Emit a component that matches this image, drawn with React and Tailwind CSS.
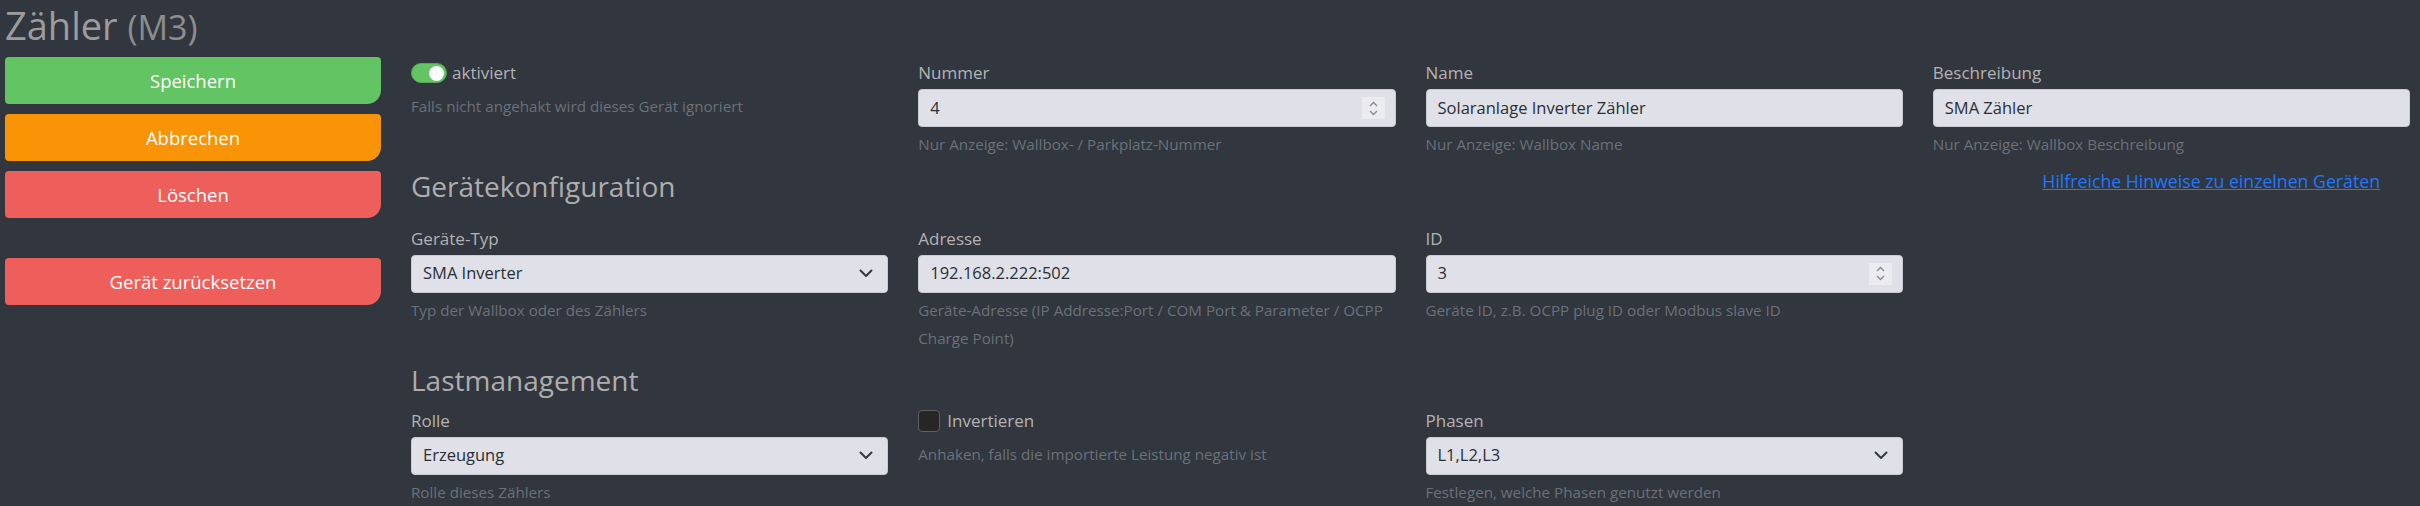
import React from 'react';

const font = "font-['Open_Sans','Noto_Sans',sans-serif]";

function Chevron() {
  return (
    <svg width="14" height="9" viewBox="0 0 14 9" className="shrink-0">
      <polyline points="1.5,1.5 7,7 12.5,1.5" fill="none" stroke="#343a40" strokeWidth="2" strokeLinecap="round" strokeLinejoin="round" />
    </svg>
  );
}

function Spinner() {
  return (
    <div className="flex h-[22px] w-[23px] flex-col items-center justify-center gap-[3px] bg-[#ebebf0]">
      <svg width="9" height="6" viewBox="0 0 9 6">
        <polyline points="1,5 4.5,1.5 8,5" fill="none" stroke="#8a8a92" strokeWidth="1.4" />
      </svg>
      <svg width="9" height="6" viewBox="0 0 9 6">
        <polyline points="1,1 4.5,4.5 8,1" fill="none" stroke="#8a8a92" strokeWidth="1.4" />
      </svg>
    </div>
  );
}

function Label({ children }) {
  return <div className="h-[24px] text-[17px] leading-[24px] text-[#b3b3b3]">{children}</div>;
}

function Help({ children, className = '' }) {
  return <div className={`text-[15.2px] leading-[28px] text-[#69717a] ${className}`}>{children}</div>;
}

function Field({ label, value, help, type = 'text' }) {
  return (
    <div className="flex flex-col">
      <Label>{label}</Label>
      <div className="mt-[4px] flex h-[38px] items-center justify-between rounded-[4px] border border-[#c9cad2] bg-[#dfe0e8] pl-[11px] pr-[10px] text-[16.5px] text-[#2b2f35]">
        <span>{value}</span>
        {type === 'number' && <Spinner />}
        {type === 'select' && <span className="pr-[4px]"><Chevron /></span>}
      </div>
      <Help className="mt-[3px]">{help}</Help>
    </div>
  );
}

function Heading({ children }) {
  return <h3 className="text-[28px] leading-[34px] text-[#adadad]">{children}</h3>;
}

function SideButton({ color, children }) {
  return (
    <button className={`flex h-[47px] w-full items-center justify-center rounded-tl-[4px] rounded-tr-[4px] rounded-bl-[4px] rounded-br-[14px] text-[18.5px] text-white ${color}`}>
      {children}
    </button>
  );
}

export default function App() {
  return (
    <div className={`min-h-screen bg-[#32363e] pl-[5px] pr-[10px] ${font}`}>
      <h1 className="h-[57px] pt-[2px] text-[38px] leading-[46px] text-[#9c9c9c]">
        Zähler <span className="text-[34px] text-[#8d8d8d]">(M3)</span>
      </h1>

      <div className="flex gap-[30px]">
        <aside className="flex w-[376px] shrink-0 flex-col gap-[10px]">
          <SideButton color="bg-[#62c462]">Speichern</SideButton>
          <SideButton color="bg-[#f89406]">Abbrechen</SideButton>
          <SideButton color="bg-[#ee5f5b]">Löschen</SideButton>
          <div className="h-[20px]" />
          <SideButton color="bg-[#ee5f5b]">Gerät zurücksetzen</SideButton>
        </aside>

        <main className="flex min-w-0 flex-1 flex-col pt-[4px]">
          <div className="grid grid-cols-4 gap-x-[30px]">
            <div className="flex flex-col">
              <div className="flex h-[24px] items-center gap-[5px]">
                <div className="flex h-[20px] w-[36px] items-center justify-end rounded-full border border-[#55a955] bg-[#62c462] px-[2px]">
                  <div className="h-[15px] w-[15px] rounded-full bg-white" />
                </div>
                <span className="text-[17px] text-[#b3b3b3]">aktiviert</span>
              </div>
              <Help className="mt-[7px]">Falls nicht angehakt wird dieses Gerät ignoriert</Help>
            </div>
            <Field label="Nummer" value="4" type="number" help="Nur Anzeige: Wallbox- / Parkplatz-Nummer" />
            <Field label="Name" value="Solaranlage Inverter Zähler" help="Nur Anzeige: Wallbox Name" />
            <Field label="Beschreibung" value="SMA Zähler" help="Nur Anzeige: Wallbox Beschreibung" />
          </div>

          <div className="mt-[10px] grid grid-cols-4 items-center gap-x-[30px]">
            <div className="col-span-3">
              <Heading>Gerätekonfiguration</Heading>
            </div>
            <div className="flex justify-end pr-[30px] pb-[10px]">
              <a href="#" className="text-[17.7px] text-[#1f78ff] underline">Hilfreiche Hinweise zu einzelnen Geräten</a>
            </div>
          </div>

          <div className="mt-[22px] grid grid-cols-4 gap-x-[30px]">
            <Field label="Geräte-Typ" value="SMA Inverter" type="select" help="Typ der Wallbox oder des Zählers" />
            <Field label="Adresse" value="192.168.2.222:502" help="Geräte-Adresse (IP Addresse:Port / COM Port & Parameter / OCPP Charge Point)" />
            <Field label="ID" value="3" type="number" help="Geräte ID, z.B. OCPP plug ID oder Modbus slave ID" />
            <div />
          </div>

          <div className="mt-[11px]">
            <Heading>Lastmanagement</Heading>
          </div>

          <div className="mt-[12px] grid grid-cols-4 gap-x-[30px]">
            <Field label="Rolle" value="Erzeugung" type="select" help="Rolle dieses Zählers" />
            <div className="flex flex-col">
              <div className="flex h-[24px] items-center gap-[7px]">
                <div className="h-[22px] w-[22px] rounded-[4px] border border-[#5c5f64] bg-[#262626]" />
                <span className="text-[17px] text-[#b3b3b3]">Invertieren</span>
              </div>
              <Help className="mt-[7px]">Anhaken, falls die importierte Leistung negativ ist</Help>
            </div>
            <Field label="Phasen" value="L1,L2,L3" type="select" help="Festlegen, welche Phasen genutzt werden" />
            <div />
          </div>
        </main>
      </div>
    </div>
  );
}
